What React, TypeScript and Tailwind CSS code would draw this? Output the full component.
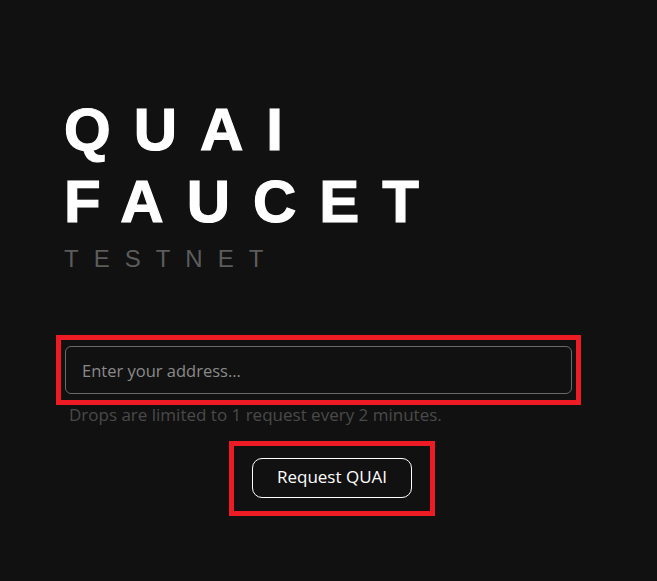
export default function App() {
  return (
    <div className="min-h-screen bg-[#111111] pl-[64px] pt-[94px] font-['Open_Sans',sans-serif]">
      <h1 className="font-['Liberation_Sans',Arial,sans-serif] text-[60px] font-bold leading-[72px] tracking-[23px] text-white [-webkit-text-stroke:1.2px_white]">
        QUAI
        <br />
        FAUCET
      </h1>
      <p className="mt-[3px] font-['Liberation_Sans',Arial,sans-serif] text-[24px] leading-[36px] tracking-[15px] text-[#5c5c5c]">
        TESTNET
      </p>

      <div className="ml-[-8px] mt-[58px] w-[525px] border-[5px] border-[#ed1c24] px-[4px] py-[6px]">
        <input
          type="text"
          placeholder="Enter your address..."
          className="block h-[48px] w-full rounded-[6px] border border-[#6a6a6a] bg-[#111111] px-[16px] text-[16.5px] text-white placeholder:text-[#8a8a8a] focus:outline-none"
        />
      </div>
      <p className="ml-[5px] mt-[-2px] text-[17px] leading-[24px] text-[#4a4a4a]">
        Drops are limited to 1 request every 2 minutes.
      </p>

      <div className="ml-[165px] mt-[14px] inline-block border-[5px] border-[#ed1c24] px-[18px] pb-[13px] pt-[12px]">
        <button
          type="button"
          className="h-[40px] w-[160px] rounded-[10px] border border-white pb-[2px] text-[17px] text-white"
        >
          Request QUAI
        </button>
      </div>
    </div>
  );
}
